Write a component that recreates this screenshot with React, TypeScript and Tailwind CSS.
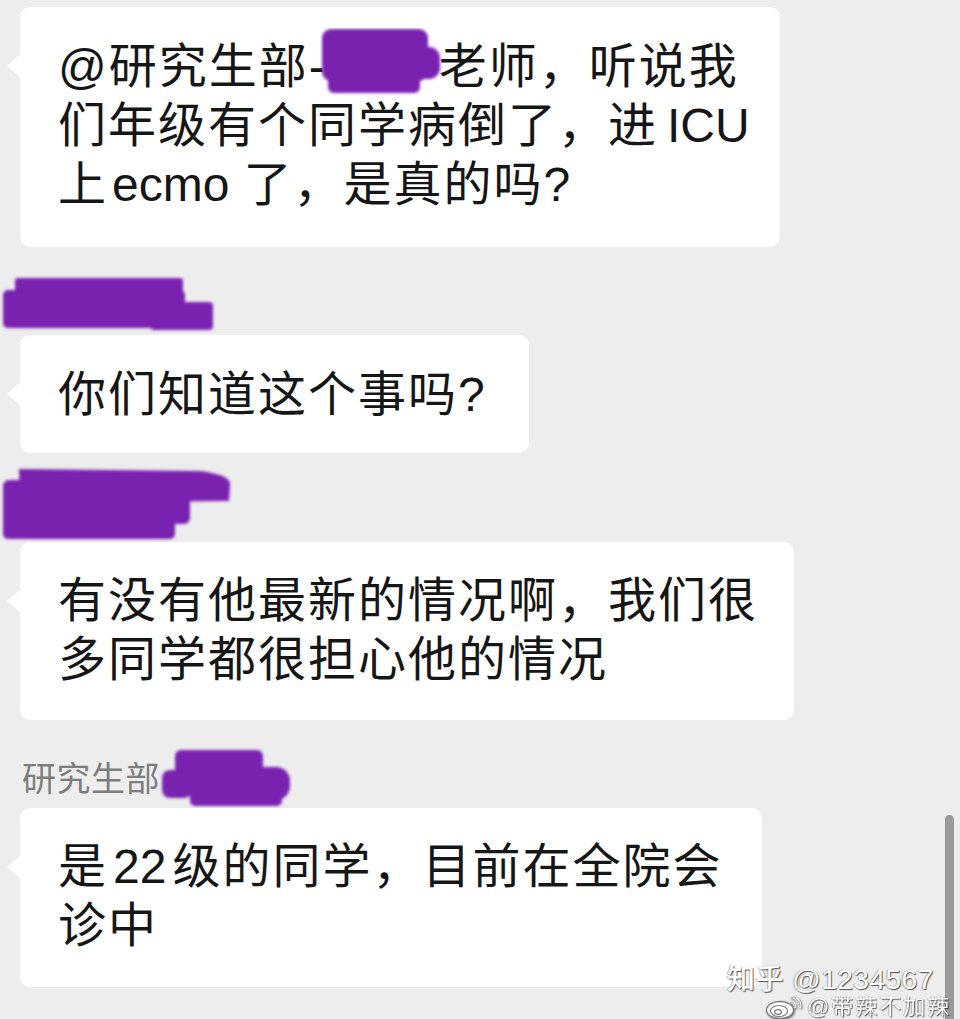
import React from "react";

const PURPLE = "#7a24b0";

const Tail = () => (
  <span className="absolute left-[-13px] top-[47px] h-0 w-0 border-y-[12px] border-r-[14px] border-y-transparent border-r-white" />
);

const Bubble = ({ className, children }: { className: string; children: React.ReactNode }) => (
  <div className={`relative rounded-[10px] bg-white pl-[38px] text-[48px] leading-[59px] tracking-[2px] text-[#161616] whitespace-nowrap ${className}`}>
    <Tail />
    {children}
  </div>
);

// latin word inside CJK line, with the narrow gaps the phone puts around it
const Latin = ({ pre, post, children }: { pre: number; post: number; children: string }) => (
  <>
    <span className="inline-block" style={{ width: pre }} />
    <span className="tracking-normal">{children}</span>
    <span className="inline-block" style={{ width: post }} />
  </>
);

const Blur = ({ id }: { id: string }) => (
  <defs>
    <filter id={id} x="-10%" y="-10%" width="120%" height="120%">
      <feGaussianBlur stdDeviation="1.4" />
    </filter>
  </defs>
);

const Weibo = () => (
  <svg width="40" height="27" viewBox="0 0 40 27" className="drop-shadow-[1px_1px_1px_rgba(0,0,0,0.55)]">
    <ellipse cx="15" cy="17" rx="13.5" ry="8.5" fill="#fff" stroke="#7d7d7d" strokeWidth="1.3" />
    <ellipse cx="14" cy="18" rx="8.5" ry="5.5" fill="none" stroke="#7d7d7d" strokeWidth="1.2" />
    <ellipse cx="13" cy="19" rx="3.4" ry="2.4" fill="none" stroke="#7d7d7d" strokeWidth="1.2" />
    <path d="M26 4 a9 9 0 0 1 9 10" fill="none" stroke="#fff" strokeWidth="2.6" strokeLinecap="round" />
    <path d="M26 4 a9 9 0 0 1 9 10" fill="none" stroke="#7d7d7d" strokeWidth="0.8" strokeLinecap="round" />
    <path d="M25 9 a4.5 4.5 0 0 1 5 5" fill="none" stroke="#fff" strokeWidth="2.4" strokeLinecap="round" />
    <path d="M25 9 a4.5 4.5 0 0 1 5 5" fill="none" stroke="#7d7d7d" strokeWidth="0.8" strokeLinecap="round" />
  </svg>
);

export default function App() {
  return (
    <div className="relative h-[1019px] w-[960px] overflow-hidden bg-[#ededed] font-['Liberation_Sans','Noto_Sans_CJK_SC',sans-serif]">
      <div className="flex flex-col pt-[7px] pl-[20px]">
        {/* message 1 */}
        <Bubble className="w-[760px] pt-[30px] pb-[33px]">
          <div>
            @研究生部-<span className="inline-block w-[112px]" />老师，听说我
          </div>
          <div>
            们年级有个同学病倒了，进<Latin pre={9} post={0}>ICU</Latin>
          </div>
          <div>
            上<Latin pre={4} post={14}>ecmo</Latin>了，是真的吗?
          </div>
          <svg className="absolute left-[300px] top-[21px]" width="124" height="68" viewBox="0 0 124 68">
            <Blur id="b0" />
            <g fill={PURPLE} filter="url(#b0)">
              <rect x="2" y="1" width="106" height="52" rx="9" />
              <rect x="96" y="19" width="24" height="32" rx="11" />
              <rect x="8" y="40" width="92" height="25" rx="6" />
            </g>
          </svg>
        </Bubble>

        {/* message 2 */}
        <div className="relative h-[88px]">
          <svg className="absolute left-[-20px] top-0" width="240" height="88" viewBox="0 0 240 88">
            <Blur id="b1" />
            <g fill={PURPLE} filter="url(#b1)">
              <rect x="15" y="31" width="168" height="24" rx="3" />
              <rect x="3" y="43" width="182" height="38" rx="5" />
              <rect x="150" y="55" width="63" height="28" rx="4" />
            </g>
          </svg>
        </div>
        <Bubble className="w-[509px] pt-[30px] pb-[29px]">
          <div>你们知道这个事吗?</div>
        </Bubble>

        {/* message 3 */}
        <div className="relative h-[89px]">
          <svg className="absolute left-[-20px] top-0" width="240" height="89" viewBox="0 0 240 89">
            <Blur id="b2" />
            <g fill={PURPLE} filter="url(#b2)">
              <path d="M19 16 L200 18 Q232 22 230 32 L229 48 L20 50 Z" />
              <rect x="3" y="27" width="187" height="44" rx="6" />
              <rect x="3" y="60" width="172" height="26" rx="5" />
            </g>
          </svg>
        </div>
        <Bubble className="w-[774px] pt-[29px] pb-[31px]">
          <div>有没有他最新的情况啊，我们很</div>
          <div>多同学都很担心他的情况</div>
        </Bubble>

        {/* message 4 */}
        <div className="relative flex h-[88px] items-start">
          <span className="mt-[39px] ml-[2px] text-[34px] leading-[40px] tracking-[0.5px] text-[#7d7d7d]">研究生部</span>
          <svg className="absolute left-[-20px] top-0" width="300" height="88" viewBox="0 0 300 88">
            <Blur id="b3" />
            <g fill={PURPLE} filter="url(#b3)">
              <rect x="175" y="30" width="88" height="46" rx="6" />
              <rect x="162" y="50" width="30" height="28" rx="8" />
              <rect x="250" y="47" width="40" height="33" rx="14" />
              <rect x="190" y="64" width="92" height="22" rx="5" />
            </g>
          </svg>
        </div>
        <Bubble className="w-[742px] pt-[29px] pb-[32px]">
          <div>
            是<Latin pre={5} post={6}>22</Latin>级的同学，目前在全院会
          </div>
          <div>诊中</div>
        </Bubble>
      </div>

      {/* scrollbar */}
      <div className="absolute left-[945px] top-[815px] h-[230px] w-[9px] rounded-full bg-[#9a9a9a]" />

      {/* watermark */}
      <div className="absolute left-[727px] top-[966px] flex flex-col text-white [text-shadow:1px_1px_1px_rgba(0,0,0,0.65),-1px_0_1px_rgba(0,0,0,0.3)]">
        <div className="text-[28px] font-medium leading-[27px] tracking-[0.5px]">知乎 @1234567</div>
        <div className="flex items-center pl-[38px]">
          <Weibo />
          <span className="ml-[2px] text-[22px] leading-[24px] tracking-[2px] opacity-90">@带辣不加辣</span>
        </div>
      </div>
    </div>
  );
}
